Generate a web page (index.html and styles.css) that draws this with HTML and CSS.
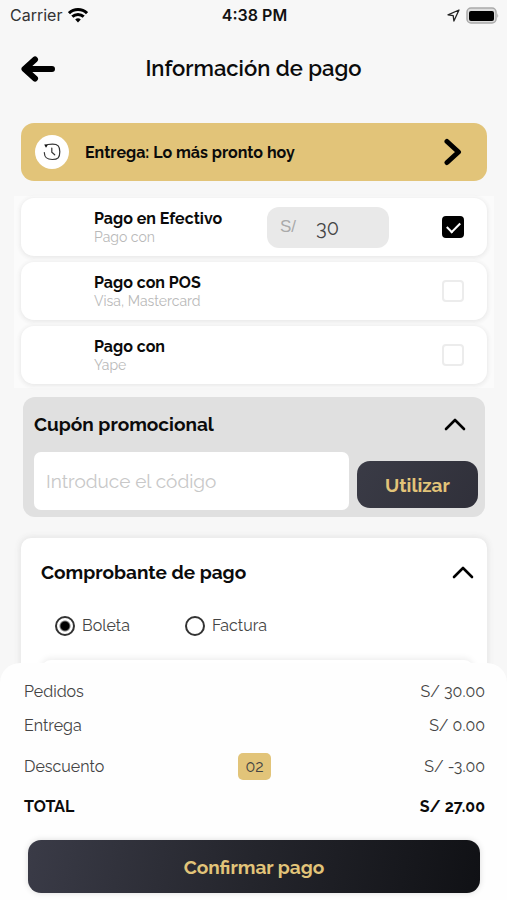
FILE: index.html
```html
<!DOCTYPE html>
<html lang="es">
<head>
<meta charset="utf-8">
<meta name="viewport" content="width=device-width, initial-scale=1">
<title>Información de pago</title>
<link rel="stylesheet" href="styles.css">
</head>
<body>
<div class="screen">
  <div class="status">
    <div class="status-left">
      <span>Carrier</span>
      <svg width="20" height="15" viewBox="0 0 20 15" fill="none" stroke="#000" stroke-width="3">
        <path d="M1 5.2C6 .4 14 .4 19 5.2"/>
        <path d="M4.3 8.7c3.3-3 8.100-3 11.400 0"/>
        <path d="M7.200 11.400c1.700-1.400 3.900-1.400 5.600 0L10 14.500z" fill="#000" stroke="none"/>
      </svg>
    </div>
    <span class="clock">4:38 PM</span>
    <div class="status-right">
      <svg width="13" height="13" viewBox="0 0 13 13" fill="none" stroke="#222" stroke-width="1.300" stroke-linejoin="round"><path d="M12 1 1 5.800l5.200.8.700 5.400z"/></svg>
      <svg width="33" height="17" viewBox="0 0 33 17">
        <rect x="1" y="1" width="29" height="15" rx="4" fill="#ddd" stroke="#aaa" stroke-width="1.500"/>
        <rect x="3" y="4" width="25" height="10" rx="2" fill="#000"/>
        <path d="M31.300 6q1.700 2.500 0 5z" fill="#aaa"/>
      </svg>
    </div>
  </div>

  <header class="topbar">
    <button class="back" aria-label="Volver">
      <svg width="34" height="26" viewBox="0 0 34 26" fill="none" stroke="#000" stroke-width="6" stroke-linecap="round" stroke-linejoin="round"><path d="M14 3.500 3.500 13 14 22.500M5 13h26"/></svg>
    </button>
    <h1>Información de pago</h1>
  </header>

  <main class="content">
    <button class="delivery">
      <span class="delivery-icon">
        <svg width="18" height="18" viewBox="0 0 18 18" fill="none" stroke="#333" stroke-width="1.200" stroke-linecap="round"><path d="M5 1.500C6.300 1.200 7.500 1.200 9.500 1.200c5.500 0 7.300 1.800 7.300 7.600s-1.800 7.700-7.500 7.700c-5.400 0-7.800-1.700-8-7"/><path d="M8.800 5v4.200l2.900 2.600"/><path d="M1.200 1.500 5.300 1.300 3 4.700z" fill="#111" stroke="none"/></svg>
      </span>
      <span class="delivery-text">Entrega: Lo más pronto hoy</span>
      <svg width="18" height="28" viewBox="0 0 18 28" fill="none" stroke="#000" stroke-width="5" stroke-linecap="round" stroke-linejoin="round"><path d="m3 3.500 11.500 10.500L3 24.500"/></svg>
    </button>

    <div class="methods">
      <div class="method">
        <label class="method-name" for="cash"><strong>Pago en Efectivo</strong><span>Pago con</span></label>
        <div class="amount"><label for="amount">S/</label><input id="amount" type="text" value="30"></div>
        <input class="check" id="cash" type="checkbox" checked>
      </div>
      <div class="method">
        <label class="method-name" for="pos"><strong>Pago con POS</strong><span>Visa, Mastercard</span></label>
        <input class="check" id="pos" type="checkbox">
      </div>
      <div class="method">
        <label class="method-name" for="yape"><strong>Pago con</strong><span>Yape</span></label>
        <input class="check" id="yape" type="checkbox">
      </div>
    </div>

    <section class="coupon">
      <div class="section-head">
        <h2>Cupón promocional</h2>
        <button class="toggle" aria-label="Contraer cupón">
          <svg width="22" height="13" viewBox="0 0 22 13" fill="none" stroke="#000" stroke-width="2.600" stroke-linecap="round" stroke-linejoin="round"><path d="m2 11 9-9 9 9"/></svg>
        </button>
      </div>
      <div class="coupon-form">
        <input type="text" placeholder="Introduce el código" aria-label="Código promocional">
        <button class="apply">Utilizar</button>
      </div>
    </section>

    <section class="receipt">
      <div class="section-head">
        <h2>Comprobante de pago</h2>
        <button class="toggle" aria-label="Contraer comprobante">
          <svg width="22" height="13" viewBox="0 0 22 13" fill="none" stroke="#000" stroke-width="2.600" stroke-linecap="round" stroke-linejoin="round"><path d="m2 11 9-9 9 9"/></svg>
        </button>
      </div>
      <div class="options">
        <label><input type="radio" name="receipt" checked>Boleta</label>
        <label><input type="radio" name="receipt">Factura</label>
      </div>
      <div class="receipt-panel"></div>
    </section>
  </main>

  <footer class="summary">
    <dl>
      <div class="line"><dt>Pedidos</dt><dd>S/ 30.00</dd></div>
      <div class="line"><dt>Entrega</dt><dd>S/ 0.00</dd></div>
      <div class="line discount"><dt>Descuento</dt><dd class="badge">02</dd><dd>S/ -3.00</dd></div>
      <div class="line total"><dt>TOTAL</dt><dd>S/ 27.00</dd></div>
    </dl>
    <button class="confirm">Confirmar pago</button>
  </footer>
</div>
</body>
</html>
```
FILE: styles.css
```css
* { box-sizing: border-box; }
body {
  margin: 0;
  background: #f7f7f7;
  color: #0b0b0b;
  font-family: Raleway, Lato, "Open Sans", sans-serif;
  font-variant-numeric: oldstyle-nums;
}
button, input { font: inherit; color: inherit; }
button { border: 0; padding: 0; background: none; cursor: pointer; }
h1, h2, dl, dd { margin: 0; }
svg { display: block; flex: none; }

.screen { height: 100vh; display: flex; flex-direction: column; overflow: hidden; }

.status {
  flex: none;
  display: grid;
  grid-template-columns: 1fr auto 1fr;
  align-items: center;
  height: 30px;
  padding: 0 8px 0 10px;
  font: 16px Inter, sans-serif;
  color: #333;
}
.status-left, .status-right { display: flex; align-items: center; gap: 6px; }
.status-right { justify-content: flex-end; }
.clock { font-weight: 600; color: #111; }

.topbar {
  flex: none;
  display: grid;
  grid-template-columns: 34px 1fr 34px;
  align-items: center;
  height: 78px;
  padding: 0 21px;
}
h1 { padding-bottom: 2px; font-size: 22px; font-weight: 600; line-height: 28px; text-align: center; }

.content {
  flex: 1;
  min-height: 0;
  overflow: hidden;
  padding: 15px 20px 0 21px;
}

.delivery {
  display: flex;
  align-items: center;
  width: 100%;
  height: 58px;
  padding: 0 25px 0 14px;
  border-radius: 13px;
  background: #e2c479;
  text-align: left;
}
.delivery-icon {
  display: grid;
  place-items: center;
  width: 34px;
  height: 34px;
  border-radius: 50%;
  background: #fff;
}
.delivery-text { flex: 1; margin-left: 16px; font-size: 16px; font-weight: 700; }

.methods {
  display: grid;
  gap: 6px;
  margin: 15px -7px 0;
  padding: 2px 7px 4px;
  background: #fbfbfb;
}
.method {
  display: flex;
  align-items: center;
  height: 58px;
  padding: 0 23px 0 73px;
  border-radius: 13px;
  background: #fff;
  box-shadow: 0 1px 4px 1px #e9e9e9;
}
.method-name { flex: 1; display: grid; }
.method-name strong { font-size: 16px; line-height: 20px; }
.method-name span { font-size: 14px; line-height: 16px; color: #b9b9b9; }
.amount {
  display: flex;
  align-items: center;
  width: 122px;
  height: 41px;
  margin-right: 53px;
  padding: 0 13px;
  border-radius: 12px;
  background: #e9e9e9;
}
.amount label { font: 17px "Liberation Sans", sans-serif; color: #aaa; }
.amount input {
  width: 60px;
  margin-left: 20px;
  padding: 2px 0 0;
  border: 0;
  background: none;
  font-size: 20px;
  color: #444;
}
.check {
  appearance: none;
  width: 22px;
  height: 22px;
  margin: 0;
  border: 2px solid #ececec;
  border-radius: 4px;
  display: grid;
  place-items: center;
}
.check:checked { background: #000; border-color: #000; }
.check:checked::before {
  content: "";
  width: 11px;
  height: 6px;
  margin-bottom: 3px;
  border: solid #fff;
  border-width: 0 0 2px 2px;
  transform: rotate(-45deg);
}

.section-head { display: flex; align-items: center; justify-content: space-between; }
h2 { font-size: 19px; line-height: 24px; }

.coupon {
  margin: 9px 2px 0;
  padding: 15px 7px 7px 11px;
  border-radius: 12px;
  background: #e0e0e0;
}
.coupon .toggle { margin-right: 12px; }
.coupon-form { display: flex; align-items: flex-end; gap: 8px; margin-top: 16px; }
.coupon-form input {
  flex: 1;
  min-width: 0;
  height: 58px;
  padding: 0 12px;
  border: 0;
  border-radius: 7px;
  background: #fff;
  font-size: 19px;
}
.coupon-form input::placeholder { color: #c8c8c8; opacity: 1; }
.apply {
  width: 121px;
  height: 47px;
  margin-bottom: 2px;
  border-radius: 13px;
  background: linear-gradient(120deg, #3a3b46, #30303a);
  color: #e2c479;
  font-size: 19px;
  font-weight: 700;
}

.receipt {
  margin-top: 21px;
  padding: 22px 13px 40px 20px;
  border-radius: 10px 10px 0 0;
  background: #fff;
  box-shadow: 0 0 6px 1px #e4e4e4;
}
.options { display: flex; gap: 55px; margin: 30px 14px 0; font-size: 16px; line-height: 24px; color: #444; }
.options label { display: flex; align-items: center; gap: 7px; }
.options input {
  appearance: none;
  width: 20px;
  height: 20px;
  margin: 0;
  border: 2px solid #333;
  border-radius: 50%;
}
.options input:checked { background: radial-gradient(circle, #000 4px, transparent 6px); }
.receipt-panel { height: 60px; margin-top: 22px; border-radius: 10px; box-shadow: 0 -2px 6px #eee; }

.summary {
  position: relative;
  flex: none;
  margin-top: -20px;
  padding: 17px 22px 7px 24px;
  border-radius: 20px 20px 0 0;
  background: #fefefe;
}
.line {
  display: flex;
  align-items: center;
  justify-content: space-between;
  height: 22px;
  margin-bottom: 12px;
  font-size: 16px;
  color: #444;
}
.discount { display: grid; grid-template-columns: 1fr auto 1fr; height: 28px; margin: 16px 0 15px; }
.discount dd:last-child { text-align: right; }
.badge { padding: 3px 7px; border-radius: 5px; background: #e2c479; line-height: 21px; }
.total { margin-bottom: 23px; font-weight: 700; color: #0b0b0b; }
.confirm {
  display: block;
  width: calc(100% - 9px);
  height: 53px;
  margin-left: 4px;
  border-radius: 13px;
  background: linear-gradient(100deg, #3a3b47, #24252c 50%, #101115);
  box-shadow: 0 0 6px #ddd;
  color: #e2c479;
  font-size: 19px;
  font-weight: 700;
}
```
